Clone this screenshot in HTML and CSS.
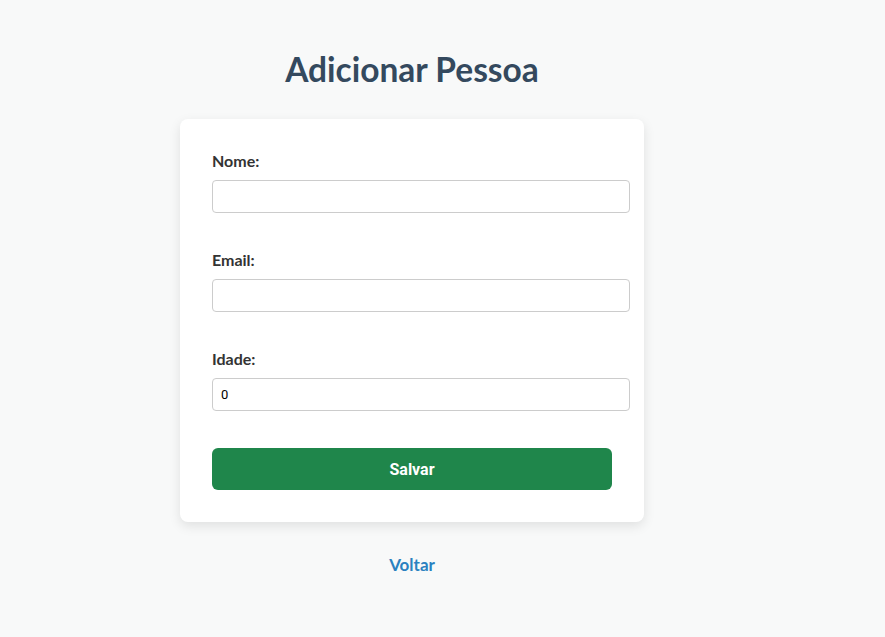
FILE: index.html
```html
<!DOCTYPE html>
<html lang="pt">
<head>
<meta charset="utf-8">
<title>Adicionar Pessoa</title>
<link rel="stylesheet" href="styles.css">
</head>
<body>
<main class="page">
  <h1 class="title">Adicionar Pessoa</h1>
  <form class="card">
    <div class="group">
      <label class="label" for="nome">Nome:</label>
      <input class="input" id="nome" type="text">
    </div>
    <div class="group">
      <label class="label" for="email">Email:</label>
      <input class="input" id="email" type="email">
    </div>
    <div class="group">
      <label class="label" for="idade">Idade:</label>
      <input class="input" id="idade" type="number" value="0">
    </div>
    <button class="btn" type="button">Salvar</button>
  </form>
  <a class="back" href="#">Voltar</a>
</main>
</body>
</html>
```
FILE: styles.css
```css
html, body {
  margin: 0;
  padding: 0;
  background: #f8f9f9;
}
body {
  font-family: "Lato", "Open Sans", sans-serif;
  color: #333;
}
.page {
  width: 464px;
  margin-left: 180px;
  padding-top: 45px;
  display: flex;
  flex-direction: column;
  align-items: center;
}
.title {
  margin: 0 0 26px;
  font-family: "Lato", sans-serif;
  font-weight: 700;
  font-size: 33.5px;
  line-height: 48px;
  color: #34495e;
}
.card {
  align-self: stretch;
  background: #fff;
  border-radius: 8px;
  box-shadow: 0 4px 12px rgba(0, 0, 0, 0.1);
  padding: 32px;
}
.group {
  margin-bottom: 37px;
}
.label {
  display: block;
  font-weight: 700;
  font-size: 16px;
  line-height: 20px;
  margin-bottom: 9px;
  color: #333;
}
.input {
  display: block;
  width: 100%;
  padding: 8px;
  height: 15px;
  border: 1px solid #ccc;
  border-radius: 4px;
  font-family: "Roboto", sans-serif;
  font-size: 13px;
  color: #000;
  background: #fff;
  margin: 0;
}
.btn {
  display: block;
  width: 100%;
  height: 42px;
  border: 0;
  border-radius: 6px;
  background: #1f864b;
  color: #fff;
  font-family: "Roboto", sans-serif;
  font-weight: 700;
  font-size: 16px;
  cursor: pointer;
}
.back {
  margin-top: 32px;
  font-weight: 700;
  font-size: 17px;
  color: #2a81c0;
  text-decoration: none;
}
```
